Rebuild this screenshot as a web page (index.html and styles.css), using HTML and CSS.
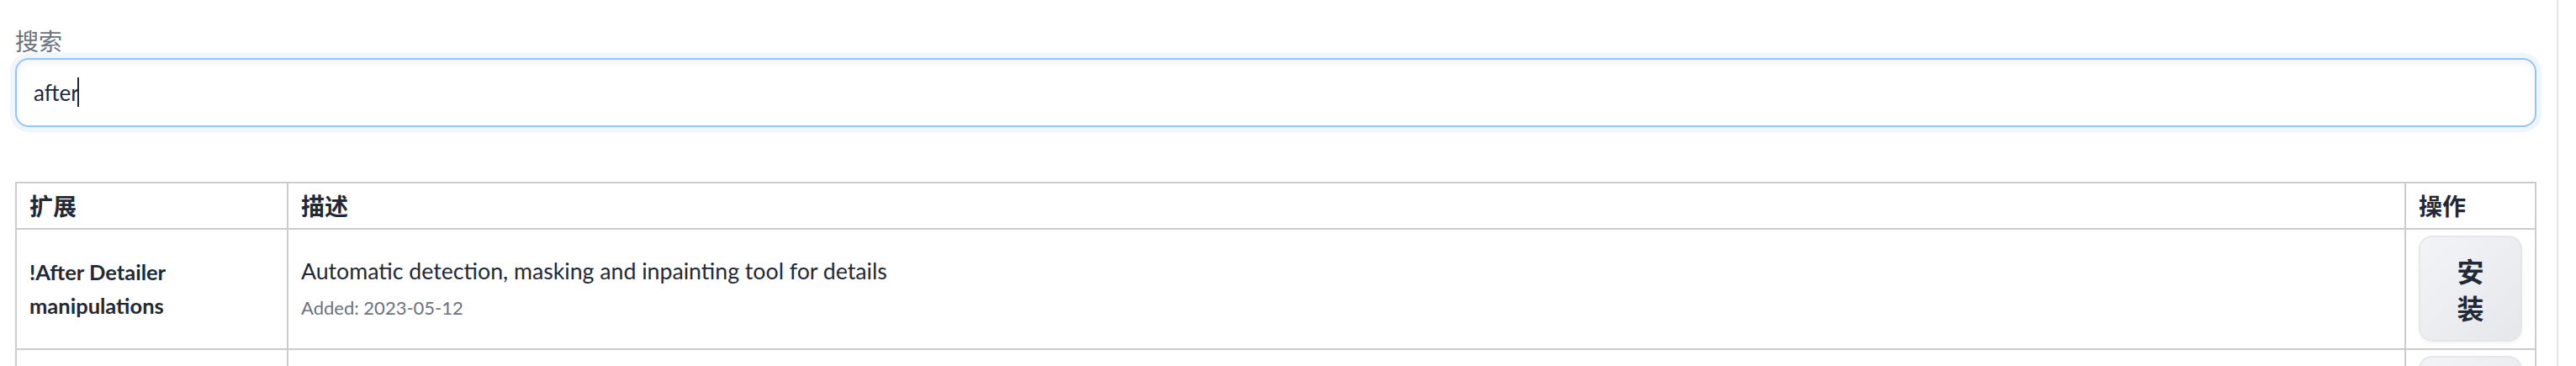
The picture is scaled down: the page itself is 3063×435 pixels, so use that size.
FILE: index.html
```html
<!DOCTYPE html>
<html lang="zh">
<head>
<meta charset="utf-8">
<title>扩展</title>
<link rel="stylesheet" href="styles.css">
</head>
<body>
<div class="page">
  <main class="main">
    <label class="field">
      <span class="field-label">搜索</span>
      <span class="search-wrap">
        <input class="search" type="text" value="after">
        <span class="caret"></span>
      </span>
    </label>
    <table class="ext-table">
      <thead>
        <tr>
          <th class="col-name">扩展</th>
          <th class="col-desc">描述</th>
          <th class="col-act">操作</th>
        </tr>
      </thead>
      <tbody>
        <tr>
          <td class="name">!After Detailer<br>manipulations</td>
          <td class="desc">
            <div class="desc-text">Automatic detection, masking and inpainting tool for details</div>
            <div class="desc-added">Added: 2023-05-12</div>
          </td>
          <td class="act"><button class="install">安装</button></td>
        </tr>
        <tr>
          <td class="name"></td>
          <td class="desc"></td>
          <td class="act"><button class="install">安装</button></td>
        </tr>
      </tbody>
    </table>
  </main>
</div>
</body>
</html>
```

FILE: styles.css
```css
html, body {
  margin: 0;
  padding: 0;
  background: #ffffff;
}

body {
  font-family: "Lato", "Noto Sans CJK SC", sans-serif;
  color: #1f2937;
  overflow: hidden;
  height: 435px;
}

.page {
  display: flex;
  min-height: 435px;
}

.main {
  width: 3042px;
  box-sizing: border-box;
  padding: 27px 24px 0 18px;
  border-right: 2px solid #e4e4e7;
  display: flex;
  flex-direction: column;
}

.field {
  display: flex;
  flex-direction: column;
}

.field-label {
  font-family: "Noto Sans CJK SC", sans-serif;
  font-size: 28px;
  line-height: 42px;
  color: #6b7280;
}

.search-wrap {
  position: relative;
  display: flex;
}

.search {
  flex: 1;
  height: 82px;
  box-sizing: border-box;
  border: 2px solid #93c5fd;
  border-radius: 16px;
  padding: 0 20px;
  font-family: "Lato", "Noto Sans CJK SC", sans-serif;
  font-size: 26px;
  color: #1f2937;
  background: #ffffff;
  outline: none;
  box-shadow: 0 0 0 6px #eff6ff, inset 0 4px 8px rgba(0, 0, 0, 0.05);
}

.caret {
  position: absolute;
  left: 74px;
  top: 23px;
  width: 2px;
  height: 35px;
  background: #1f2937;
}

.ext-table {
  margin-top: 65px;
  width: 100%;
  border-collapse: collapse;
  border: 2px solid #cccccc;
}

.ext-table th,
.ext-table td {
  border: 2px solid #cccccc;
  text-align: left;
}

.ext-table th {
  font-family: "Noto Sans CJK SC", sans-serif;
  font-weight: 700;
  font-size: 28px;
  line-height: 39px;
  padding: 7px 15px;
  color: #1f2937;
}

.col-name { width: 291px; }
.col-act { width: 122px; }

.ext-table td {
  padding: 7px 15px 8px;
  vertical-align: middle;
}

.name {
  font-size: 25.5px;
  font-weight: 700;
  line-height: 40px;
}

.desc-text {
  font-size: 26.7px;
  line-height: 38px;
}

.desc-added {
  margin-top: 8px;
  font-size: 22px;
  line-height: 34px;
  color: #6b7280;
}

.install {
  width: 123px;
  height: 126px;
  box-sizing: border-box;
  padding: 0 36px;
  border: 2px solid #e5e7eb;
  border-radius: 16px;
  background: linear-gradient(to bottom right, #f3f4f6, #e5e7eb);
  box-shadow: 0 2px 4px rgba(0, 0, 0, 0.05);
  font-family: "Noto Sans CJK SC", sans-serif;
  font-weight: 700;
  font-size: 32px;
  line-height: 44px;
  color: #1f2937;
  cursor: pointer;
}
```
